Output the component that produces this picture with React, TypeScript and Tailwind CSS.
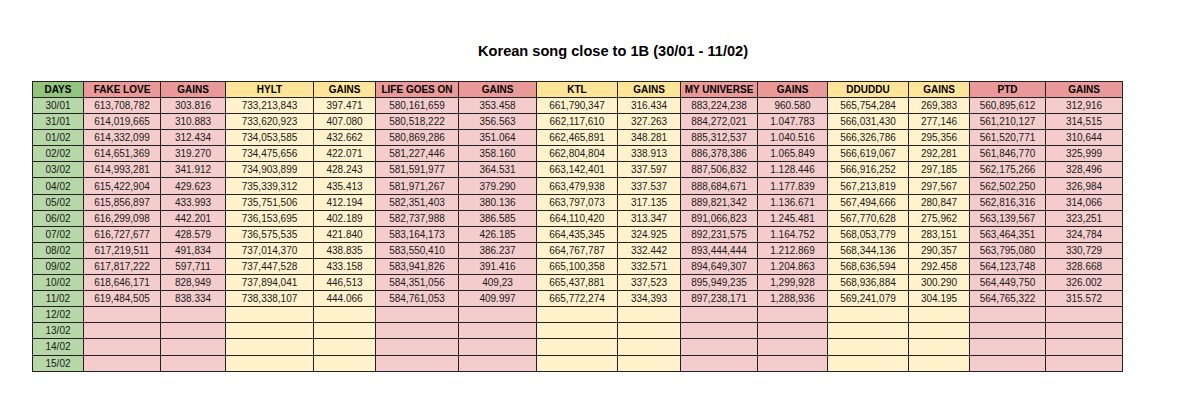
import React from "react";

type Tone = "g" | "r" | "y";

const columns: { label: string; tone: Tone; w: number }[] = [
  { label: "DAYS", tone: "g", w: 51 },
  { label: "FAKE LOVE", tone: "r", w: 77 },
  { label: "GAINS", tone: "r", w: 65 },
  { label: "HYLT", tone: "y", w: 88 },
  { label: "GAINS", tone: "y", w: 62 },
  { label: "LIFE GOES ON", tone: "r", w: 83 },
  { label: "GAINS", tone: "r", w: 78 },
  { label: "KTL", tone: "y", w: 81 },
  { label: "GAINS", tone: "y", w: 63 },
  { label: "MY UNIVERSE", tone: "r", w: 77 },
  { label: "GAINS", tone: "r", w: 70 },
  { label: "DDUDDU", tone: "y", w: 81 },
  { label: "GAINS", tone: "y", w: 61 },
  { label: "PTD", tone: "r", w: 76 },
  { label: "GAINS", tone: "r", w: 77 },
];

const headBg: Record<Tone, string> = {
  g: "bg-[#93c47d]",
  r: "bg-[#ea9999]",
  y: "bg-[#ffe599]",
};

const cellBg: Record<Tone, string> = {
  g: "bg-[#b6d7a8]",
  r: "bg-[#f4cccc]",
  y: "bg-[#fff2cc]",
};

const rows: string[][] = [
  ["30/01", "613,708,782", "303.816", "733,213,843", "397.471", "580,161,659", "353.458", "661,790,347", "316.434", "883,224,238", "960.580", "565,754,284", "269,383", "560,895,612", "312,916"],
  ["31/01", "614,019,665", "310.883", "733,620,923", "407.080", "580,518,222", "356.563", "662,117,610", "327.263", "884,272,021", "1.047.783", "566,031,430", "277,146", "561,210,127", "314,515"],
  ["01/02", "614,332,099", "312.434", "734,053,585", "432.662", "580,869,286", "351.064", "662,465,891", "348.281", "885,312,537", "1.040.516", "566,326,786", "295,356", "561,520,771", "310,644"],
  ["02/02", "614,651,369", "319.270", "734,475,656", "422.071", "581,227,446", "358.160", "662,804,804", "338.913", "886,378,386", "1.065.849", "566,619,067", "292,281", "561,846,770", "325,999"],
  ["03/02", "614,993,281", "341.912", "734,903,899", "428.243", "581,591,977", "364.531", "663,142,401", "337.597", "887,506,832", "1.128.446", "566,916,252", "297,185", "562,175,266", "328,496"],
  ["04/02", "615,422,904", "429.623", "735,339,312", "435.413", "581,971,267", "379.290", "663,479,938", "337.537", "888,684,671", "1.177.839", "567,213,819", "297,567", "562,502,250", "326,984"],
  ["05/02", "615,856,897", "433.993", "735,751,506", "412.194", "582,351,403", "380.136", "663,797,073", "317.135", "889,821,342", "1.136.671", "567,494,666", "280,847", "562,816,316", "314,066"],
  ["06/02", "616,299,098", "442.201", "736,153,695", "402.189", "582,737,988", "386.585", "664,110,420", "313.347", "891,066,823", "1.245.481", "567,770,628", "275,962", "563,139,567", "323,251"],
  ["07/02", "616,727,677", "428.579", "736,575,535", "421.840", "583,164,173", "426.185", "664,435,345", "324.925", "892,231,575", "1.164.752", "568,053,779", "283,151", "563,464,351", "324,784"],
  ["08/02", "617,219,511", "491,834", "737,014,370", "438.835", "583,550,410", "386.237", "664,767,787", "332.442", "893,444,444", "1.212.869", "568,344,136", "290,357", "563,795,080", "330,729"],
  ["09/02", "617,817,222", "597,711", "737,447,528", "433.158", "583,941,826", "391.416", "665,100,358", "332.571", "894,649,307", "1.204.863", "568,636,594", "292.458", "564,123,748", "328.668"],
  ["10/02", "618,646,171", "828,949", "737,894,041", "446,513", "584,351,056", "409,23", "665,437,881", "337,523", "895,949,235", "1,299,928", "568,936,884", "300.290", "564,449,750", "326.002"],
  ["11/02", "619,484,505", "838.334", "738,338,107", "444.066", "584,761,053", "409.997", "665,772,274", "334,393", "897,238,171", "1,288,936", "569,241,079", "304.195", "564,765,322", "315.572"],
  ["12/02"],
  ["13/02"],
  ["14/02"],
  ["15/02"],
];

export default function App() {
  return (
    <div className="w-[1200px] h-[418px] bg-white font-['Liberation_Sans',Arial,sans-serif] text-[#1a1a1a]">
      <div className="pt-[41px] pl-[478px] text-[14.6px] leading-[20px] font-bold text-black">
        Korean song close to 1B (30/01 - 11/02)
      </div>
      <div className="pl-[32px] pt-[20px]">
        <table className="border-collapse table-fixed text-[10px]">
          <colgroup>
            {columns.map((c, i) => (
              <col key={i} style={{ width: c.w }} />
            ))}
          </colgroup>
          <thead>
            <tr>
              {columns.map((c, i) => (
                <th
                  key={i}
                  className={`h-[16px] border border-[#222] p-0 leading-[14px] font-bold text-black ${headBg[c.tone]}`}
                >
                  {c.label}
                </th>
              ))}
            </tr>
          </thead>
          <tbody>
            {rows.map((r, ri) => (
              <tr key={ri}>
                {columns.map((c, ci) => (
                  <td
                    key={ci}
                    className={`h-[16.1px] border border-[#222] p-0 leading-[13px] text-center ${cellBg[c.tone]}`}
                  >
                    {r[ci] ?? ""}
                  </td>
                ))}
              </tr>
            ))}
          </tbody>
        </table>
      </div>
    </div>
  );
}
